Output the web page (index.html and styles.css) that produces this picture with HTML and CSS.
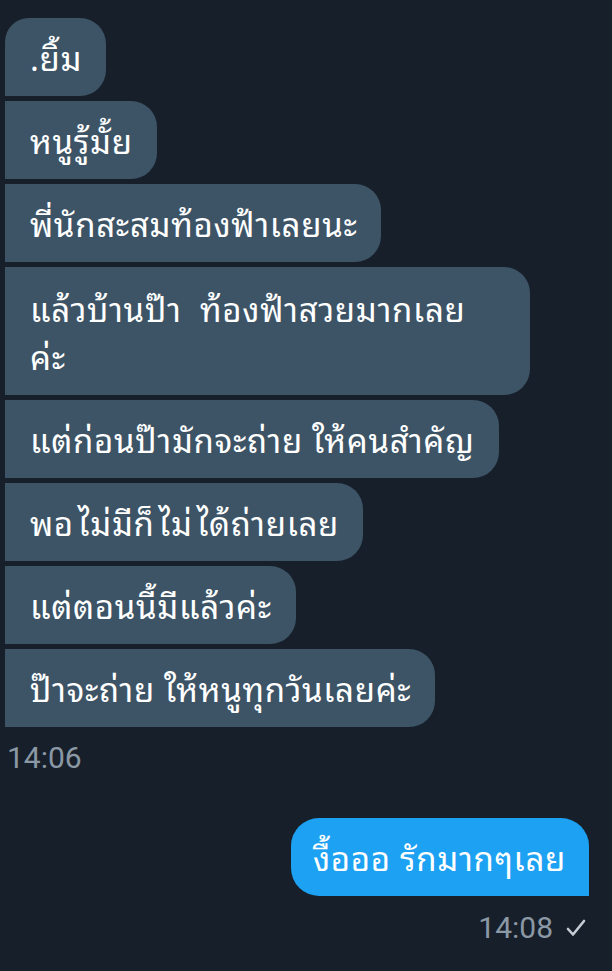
FILE: index.html
```html
<!DOCTYPE html>
<html lang="th">
<head>
<meta charset="utf-8">
<title>Chat</title>
<link rel="stylesheet" href="styles.css">
</head>
<body>
<main class="chat">
  <section class="group received">
    <div class="bubble first">.ยิ้ม</div>
    <div class="bubble">หนูรู้มั้ย</div>
    <div class="bubble">พี่นักสะสมท้องฟ้าเลยนะ</div>
    <div class="bubble multiline">แล้วบ้านป๊า&nbsp; ท้องฟ้าสวยมากเลย<br>ค่ะ</div>
    <div class="bubble">แต่ก่อนป๊ามักจะถ่าย<span class="ai wide">ใ</span>ห้คนสำคัญ</div>
    <div class="bubble">พอ<span class="ai">ไ</span>ม่มีก็<span class="ai">ไ</span>ม่<span class="ai">ไ</span>ด้ถ่ายเลย</div>
    <div class="bubble">แต่ตอนนี้มีแล้วค่ะ</div>
    <div class="bubble">ป๊าจะถ่าย<span class="ai wide">ใ</span>ห้หนูทุกวันเลยค่ะ</div>
    <div class="time">14:06</div>
  </section>
  <section class="group sent">
    <div class="bubble">งื้อออ รักมากๆเลย</div>
    <div class="time">14:08
      <svg class="check" width="20" height="18" viewBox="0 0 20 18"><polyline points="2,10 7,15.5 18,2" fill="none" stroke="currentColor" stroke-width="2.6" stroke-linecap="round" stroke-linejoin="round"/></svg>
    </div>
  </section>
</main>
</body>
</html>
```

FILE: styles.css
```css
html, body {
  margin: 0;
  padding: 0;
  background: #17202a;
}
body {
  width: 612px;
  height: 971px;
  overflow: hidden;
  font-family: "Noto Sans Thai Looped", Roboto, sans-serif;
  color: #ffffff;
}
.chat {
  display: flex;
  flex-direction: column;
  padding: 18px 0 0 5px;
}
.group {
  display: flex;
  flex-direction: column;
  gap: 5px;
}
.received {
  align-items: flex-start;
}
.sent {
  align-items: flex-end;
  padding-right: 23px;
  margin-top: 43px;
}
.bubble {
  box-sizing: border-box;
  max-width: 525px;
  padding: 15px 24px 15px 25px;
  font-size: 33px;
  line-height: 48px;
  letter-spacing: 0.7px;
  background: #3d5466;
  border-radius: 0 26px 26px 0;
}
.ai {
  margin-left: 4px;
}
.ai.wide {
  margin-left: 9px;
}
.bubble.multiline {
  width: 525px;
  padding-top: 17px;
  padding-bottom: 15px;
}
.received .bubble.first {
  border-top-left-radius: 24px;
}
.sent .bubble {
  background: #1da1f2;
  padding-left: 22px;
  padding-right: 23px;
  border-radius: 28px 28px 0 28px;
}
.time {
  font-family: Roboto, "Noto Sans", sans-serif;
  font-size: 30px;
  color: #8b98a5;
  line-height: 34px;
  display: flex;
  align-items: center;
  gap: 13px;
}
.received .time {
  margin-top: 9px;
  padding-left: 2px;
}
.sent .time {
  margin-top: 10px;
  padding-right: 3px;
}
.check {
  color: #c5ccd3;
}
```
